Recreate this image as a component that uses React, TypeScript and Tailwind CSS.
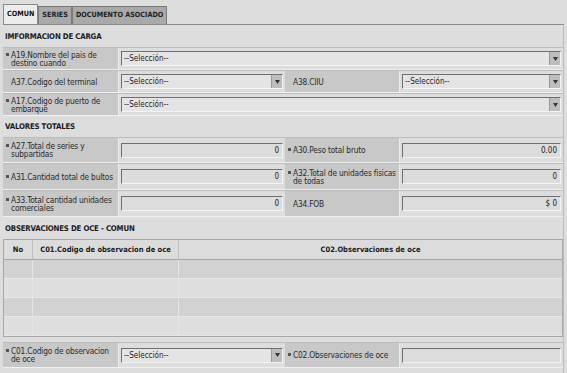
import { ReactNode } from "react";

function Arrow() {
    return (
        <span className="w-[11px] h-full flex items-center justify-center bg-[#bdbdbd] border-l border-[#9a9a9a]">
            <svg width="5" height="4" viewBox="0 0 5 4">
                <polygon points="0,0 5,0 2.5,4" fill="#333" />
            </svg>
        </span>
    );
}

function Select() {
    return (
        <div className="h-[15px] w-full flex items-stretch bg-[#e4e4e4] border border-t-[#707070] border-l-[#707070] border-b-[#f4f4f4] border-r-[#f4f4f4]">
            <span className="flex-1 pl-[2px] leading-[13px] text-[8px] text-[#222]">--Selección--</span>
            <Arrow />
        </div>
    );
}

function Input({ value = "" }: { value?: string }) {
    return (
        <div className="h-[15px] w-full bg-[#dcdcdc] border border-t-[#707070] border-l-[#707070] border-b-[#f4f4f4] border-r-[#f4f4f4] pr-[3px] text-right leading-[13px] text-[8px] text-[#222]">
            {value}
        </div>
    );
}

function Label({ children, req = true }: { children: ReactNode; req?: boolean }) {
    return (
        <div className="bg-[#c8c8c8] flex items-center pl-[3px] text-[8.3px] leading-[8px] tracking-[-0.18px] text-[#2a2a2a] border-r border-[#ececec]">
            <div className="flex items-start">
                {req ? (
                    <span className="w-[3px] h-[3px] mt-[2px] mr-[2px] shrink-0 bg-[#555]" />
                ) : (
                    <span className="w-[5px] shrink-0" />
                )}
                <span>{children}</span>
            </div>
        </div>
    );
}

function Cell({ children }: { children: ReactNode }) {
    return <div className="flex items-center px-[2px]">{children}</div>;
}

function Heading({ h, children }: { h: number; children: ReactNode }) {
    return (
        <div
            className="flex items-end pb-[4px] pl-[2px] font-bold text-[7.8px] tracking-[-0.2px] text-[#1a1a1a]"
            style={{ height: h }}
        >
            {children}
        </div>
    );
}

function Row({ h, children }: { h: number; children: ReactNode }) {
    return (
        <div
            className="grid grid-cols-[116px_166px_115px_1fr] border-b border-[#f0f0f0] border-t border-t-[#bcbcbc]"
            style={{ height: h }}
        >
            {children}
        </div>
    );
}

function WideRow({ h, children }: { h: number; children: ReactNode }) {
    return (
        <div
            className="grid grid-cols-[116px_1fr] border-b border-[#f0f0f0] border-t border-t-[#bcbcbc]"
            style={{ height: h }}
        >
            {children}
        </div>
    );
}

export default function App() {
    return (
        <div
            className="w-[567px] h-[373px] bg-[#dddddd] pl-[3px] pr-[3px] pt-[5px] overflow-hidden"
            style={{ fontFamily: '"DejaVu Sans Condensed", "DejaVu Sans", sans-serif' }}
        >
            {/* tabs */}
            <div className="flex items-end h-[20px] border-b border-[#8a8a8a]">
                <div className="h-[20px] px-[3px] flex items-center bg-[#ececec] border border-b-0 border-[#8a8a8a] font-bold text-[7.2px] text-[#111]">
                    COMUN
                </div>
                <div className="h-[18px] px-[3px] flex items-center bg-[#a9a9a9] border border-b-0 border-[#7a7a7a] font-bold text-[7.2px] text-[#222]">
                    SERIES
                </div>
                <div className="h-[18px] px-[3px] flex items-center bg-[#a9a9a9] border border-b-0 border-[#7a7a7a] font-bold text-[7.2px] text-[#222]">
                    DOCUMENTO ASOCIADO
                </div>
            </div>

            <div className="border-r border-[#bdbdbd] h-full">
                <Heading h={22}>IMFORMACION DE CARGA</Heading>
                <WideRow h={23}>
                    <Label>A19.Nombre del pais de destino cuando</Label>
                    <Cell><Select /></Cell>
                </WideRow>
                <Row h={23}>
                    <Label req={false}>A37.Codigo del terminal</Label>
                    <Cell><Select /></Cell>
                    <Label req={false}>A38.CIIU</Label>
                    <Cell><Select /></Cell>
                </Row>
                <WideRow h={23}>
                    <Label>A17.Codigo de puerto de embarque</Label>
                    <Cell><Select /></Cell>
                </WideRow>

                <Heading h={21}>VALORES TOTALES</Heading>
                <Row h={26}>
                    <Label>A27.Total de series y subpartidas</Label>
                    <Cell><Input value="0" /></Cell>
                    <Label>A30.Peso total bruto</Label>
                    <Cell><Input value="0.00" /></Cell>
                </Row>
                <Row h={27}>
                    <Label>A31.Cantidad total de bultos</Label>
                    <Cell><Input value="0" /></Cell>
                    <Label>A32.Total de unidades fisicas de todas</Label>
                    <Cell><Input value="0" /></Cell>
                </Row>
                <Row h={27}>
                    <Label>A33.Total cantidad unidades comerciales</Label>
                    <Cell><Input value="0" /></Cell>
                    <Label req={false}>A34.FOB</Label>
                    <Cell><Input value="$ 0" /></Cell>
                </Row>

                <Heading h={22}>OBSERVACIONES DE OCE - COMUN</Heading>
                <div className="border border-[#a8a8a8] bg-[#dcdcdc]">
                    <div className="grid grid-cols-[29px_146px_1fr] h-[20px] border-b border-[#a8a8a8] font-bold text-[7.5px] text-[#1a1a1a]">
                        <div className="flex items-center justify-center border-r border-[#bdbdbd]">No</div>
                        <div className="flex items-center justify-center border-r border-[#bdbdbd]">C01.Codigo de observacion de oce</div>
                        <div className="flex items-center justify-center">C02.Observaciones de oce</div>
                    </div>
                    {["bg-[#d2d2d2]", "bg-[#dedede]", "bg-[#d2d2d2]", "bg-[#dedede]"].map((bg, i) => (
                        <div key={i} className={`grid grid-cols-[29px_146px_1fr] h-[19px] border-b border-[#e8e8e8] ${bg}`}>
                            <div className="border-r border-[#e4e4e4]" />
                            <div className="border-r border-[#e4e4e4]" />
                            <div />
                        </div>
                    ))}
                </div>
                <div className="h-[5px]" />
                <Row h={26}>
                    <Label>C01.Codigo de observacion de oce</Label>
                    <Cell><Select /></Cell>
                    <Label>C02.Observaciones de oce</Label>
                    <Cell><Input /></Cell>
                </Row>
            </div>
        </div>
    );
}
